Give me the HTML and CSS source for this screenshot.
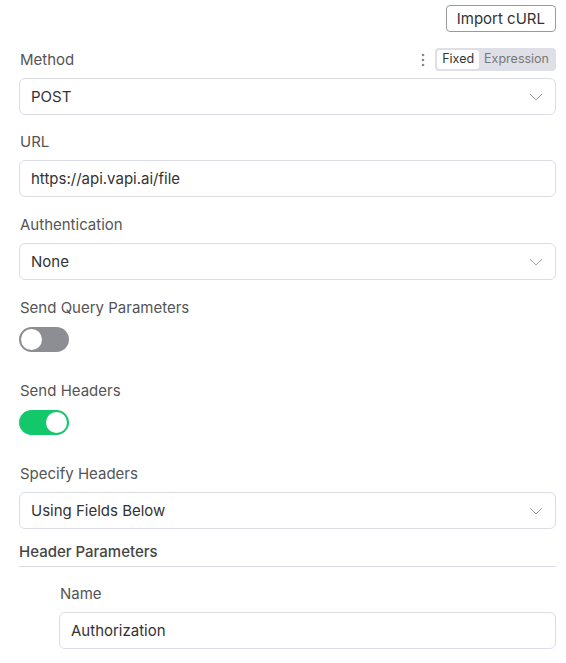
FILE: index.html
```html
<!DOCTYPE html>
<html lang="en">
<head>
    <meta charset="UTF-8">
    <meta name="viewport" content="width=device-width, initial-scale=1.0">
    <title>HTTP Request</title>
    <link rel="stylesheet" href="styles.css">
</head>
<body>
    <div class="panel">
        <div class="top-actions">
            <button class="btn-import">Import cURL</button>
        </div>

        <div class="field first">
            <div class="label-row">
                <label>Method</label>
                <div class="label-tools">
                    <svg class="dots" width="4" height="14" viewBox="0 0 4 14">
                        <circle cx="2" cy="2" r="1.3" fill="#888"/>
                        <circle cx="2" cy="7" r="1.3" fill="#888"/>
                        <circle cx="2" cy="12" r="1.3" fill="#888"/>
                    </svg>
                    <div class="mode-switch">
                        <span class="mode active">Fixed</span>
                        <span class="mode">Expression</span>
                    </div>
                </div>
            </div>
            <div class="select">
                <span>POST</span>
                <svg class="chevron" width="14" height="8" viewBox="0 0 14 8"><path d="M1 1l6 6 6-6" fill="none" stroke="#a0a0a8" stroke-width="1"/></svg>
            </div>
        </div>

        <div class="field url-field">
            <label class="label">URL</label>
            <div class="input">https://api.vapi.ai/file</div>
        </div>

        <div class="field">
            <label class="label">Authentication</label>
            <div class="select">
                <span>None</span>
                <svg class="chevron" width="14" height="8" viewBox="0 0 14 8"><path d="M1 1l6 6 6-6" fill="none" stroke="#a0a0a8" stroke-width="1"/></svg>
            </div>
        </div>

        <div class="field toggle-field">
            <label class="label">Send Query Parameters</label>
            <div class="switch"><span class="knob"></span></div>
        </div>

        <div class="field toggle-field">
            <label class="label">Send Headers</label>
            <div class="switch on"><span class="knob"></span></div>
        </div>

        <div class="field">
            <label class="label">Specify Headers</label>
            <div class="select">
                <span>Using Fields Below</span>
                <svg class="chevron" width="14" height="8" viewBox="0 0 14 8"><path d="M1 1l6 6 6-6" fill="none" stroke="#a0a0a8" stroke-width="1"/></svg>
            </div>
        </div>

        <div class="section-title">Header Parameters</div>

        <div class="param">
            <label class="label">Name</label>
            <div class="input">Authorization</div>
        </div>
    </div>
</body>
</html>
```

FILE: styles.css
```css
body {
    margin: 0;
    font-family: Inter, "Noto Sans", sans-serif;
    font-size: 15px;
    color: #333;
    background-color: #fff;
}
.panel {
    padding: 5px 10px 0 19px;
}
.top-actions {
    display: flex;
    justify-content: flex-end;
}
.btn-import {
    font-family: inherit;
    font-size: 15px;
    color: #333;
    background-color: #fff;
    border: 1px solid #9a9a9a;
    border-radius: 4px;
    height: 27px;
    padding: 0 10px;
}
.field {
    margin-top: 18px;
}
.field.first {
    margin-top: 16px;
}
.field.url-field {
    margin-top: 17px;
}
.label-row {
    display: flex;
    justify-content: space-between;
    align-items: center;
    height: 23px;
    margin-bottom: 7px;
}
.label-row label {
    color: #555;
    margin-left: 1px;
}
.label-tools {
    display: flex;
    align-items: center;
    gap: 10px;
}
.mode-switch {
    display: flex;
    background-color: #dfe0e7;
    border-radius: 4px;
    padding: 2px;
    font-size: 12.5px;
}
.mode {
    padding: 1px 5px 2px;
    color: #777;
    border-radius: 3px;
    line-height: 16px;
}
.mode.active {
    background-color: #fff;
    color: #333;
}
.label {
    display: block;
    color: #555;
    line-height: 20px;
    margin-left: 1px;
    margin-bottom: 8px;
}
.select,
.input {
    display: flex;
    align-items: center;
    justify-content: space-between;
    height: 35px;
    border: 1px solid #dcdce6;
    border-radius: 6px;
    padding: 0 12px 0 11px;
    color: #333;
}
.toggle-field {
    padding-bottom: 11px;
}
.switch {
    width: 50px;
    height: 25px;
    border-radius: 13px;
    background-color: #8d8e93;
    position: relative;
    margin-top: 9px;
}
.switch .knob {
    position: absolute;
    top: 2px;
    left: 2px;
    width: 21px;
    height: 21px;
    border-radius: 50%;
    background-color: #fff;
}
.switch.on {
    background-color: #13c86a;
}
.switch.on .knob {
    left: auto;
    right: 2px;
}
.section-title {
    margin-top: 13px;
    color: #444;
    font-weight: 500;
    line-height: 20px;
    padding-bottom: 4px;
    border-bottom: 1px solid #dcdce6;
}
.param {
    margin-top: 17px;
    margin-left: 40px;
}
```
